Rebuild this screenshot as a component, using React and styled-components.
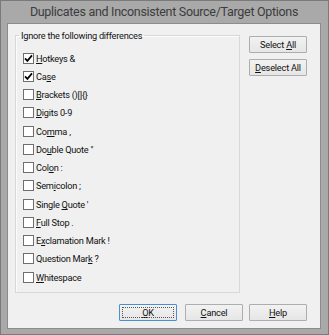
import styled, { createGlobalStyle } from 'styled-components'

const Global = createGlobalStyle`
  html, body {
    margin: 0;
    padding: 0;
    background: #a9a9a9;
  }
  * {
    box-sizing: border-box;
  }
`;

const Window = styled.div`
  width: 329px;
  height: 335px;
  display: flex;
  flex-direction: column;
  background: #a9a9a9;
  border: 1px solid #7a7a7a;
  padding: 0 7px 5px 6px;
  font-family: Roboto, "Liberation Sans", Arial, sans-serif;
`;

const TitleBar = styled.div`
  height: 22px;
  display: flex;
  align-items: center;
  justify-content: center;
  font-family: Roboto, "Liberation Sans", sans-serif;
  font-size: 12.5px;
  letter-spacing: -0.3px;
  color: #3c3c3c;
  padding-bottom: 1px;
`;

const Client = styled.div`
  flex: 1;
  background: #f0f0f0;
  border: 1px solid #8c8c8c;
  padding: 5px 13px 0 7px;
  display: flex;
  flex-direction: column;
  font-size: 9.2px;
  letter-spacing: -0.25px;
  color: #111;
`;

const Main = styled.div`
  display: flex;
  gap: 9px;
`;

const GroupBox = styled.fieldset`
  width: 226px;
  height: 264px;
  margin: 0;
  padding: 7px 0 0 7px;
  border: 1px solid #d8d8d8;
  box-shadow: inset 1px 1px 0 #fbfbfb;
  min-width: 0;
`;

const Legend = styled.legend`
  padding: 0 2px;
  margin-left: -4px;
  line-height: 13px;
`;

const Row = styled.label`
  display: flex;
  align-items: center;
  height: 18.25px;
  gap: 2px;
`;

const Box = styled.span`
  width: 11px;
  height: 11px;
  background: #fff;
  border: 1px solid #6f6f6f;
  display: flex;
  align-items: center;
  justify-content: center;
  flex-shrink: 0;
`;

const Key = styled.u`
  text-decoration: underline;
  text-underline-offset: 1px;
`;

const SideButtons = styled.div`
  display: flex;
  flex-direction: column;
  gap: 6px;
  margin-top: 7px;
`;

const Button = styled.button`
  width: 58px;
  height: 17px;
  padding: 0;
  font-family: inherit;
  font-size: 9.2px;
  letter-spacing: -0.2px;
  color: #111;
  background: linear-gradient(#f2f2f2, #e6e6e6);
  border: 1px solid ${p => (p.$default ? '#4a8fd0' : '#adadad')};
  border-radius: 1px;
  position: relative;
  margin-left: ${p => p.$ml || 0}px;

  ${p => p.$default && `
    &::after {
      content: '';
      position: absolute;
      inset: 2px;
      border: 1px dotted #555;
    }
  `}
`;

const Footer = styled.div`
  display: flex;
  justify-content: flex-end;
  gap: 8px;
  margin-top: 11px;
`;

const Check = () => (
  <svg width="9" height="9" viewBox="0 0 9 9">
    <path d="M1 4.4 L3.4 6.9 L8 1.4" fill="none" stroke="#000" strokeWidth="1.7" />
  </svg>
);

const options = [
  { pre: '', key: 'H', post: 'otkeys &', on: true },
  { pre: 'Ca', key: 's', post: 'e', on: true },
  { pre: '', key: 'B', post: 'rackets ()[]{}' },
  { pre: '', key: 'D', post: 'igits 0-9' },
  { pre: 'Co', key: 'm', post: 'ma ,' },
  { pre: 'Do', key: 'u', post: 'ble Quote "' },
  { pre: 'Col', key: 'o', post: 'n :' },
  { pre: 'Sem', key: 'i', post: 'colon ;' },
  { pre: 'Single ', key: 'Q', post: "uote '" },
  { pre: '', key: 'F', post: 'ull Stop .' },
  { pre: 'E', key: 'x', post: 'clamation Mark !' },
  { pre: 'Question Mar', key: 'k', post: ' ?' },
  { pre: '', key: 'W', post: 'hitespace' },
];

export default function App() {
  return (
    <>
      <Global />
      <Window>
        <TitleBar>Duplicates and Inconsistent Source/Target Options</TitleBar>
        <Client>
          <Main>
            <GroupBox>
              <Legend>Ignore the following differences</Legend>
              {options.map((o, i) => (
                <Row key={i}>
                  <Box>{o.on && <Check />}</Box>
                  <span>
                    {o.pre}
                    <Key>{o.key}</Key>
                    {o.post}
                  </span>
                </Row>
              ))}
            </GroupBox>
            <SideButtons>
              <Button>Select <Key>A</Key>ll</Button>
              <Button><Key>D</Key>eselect All</Button>
            </SideButtons>
          </Main>
          <Footer>
            <Button $default><Key>O</Key>K</Button>
            <Button><Key>C</Key>ancel</Button>
            <Button $ml={-2}><Key>H</Key>elp</Button>
          </Footer>
        </Client>
      </Window>
    </>
  )
}
